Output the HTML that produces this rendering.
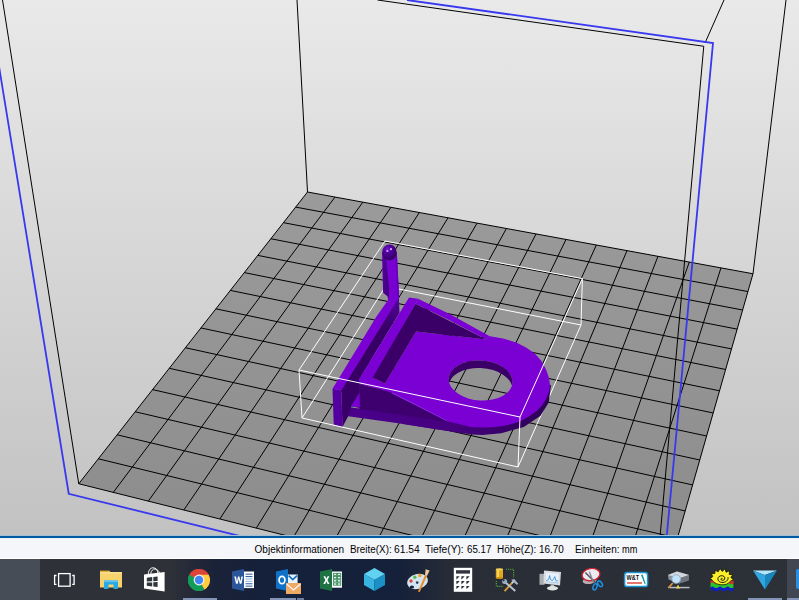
<!DOCTYPE html>
<html><head><meta charset="utf-8"><title>3D</title>
<style>
html,body{margin:0;padding:0;}
body{width:799px;height:600px;overflow:hidden;position:relative;background:#c2c2c2;font-family:"Liberation Sans",sans-serif;}
#vp{position:absolute;left:0;top:0;width:799px;height:535px;background:linear-gradient(to bottom,#e9e9e9 0px,#c2c2c2 536px);overflow:hidden;}
#vp svg{position:absolute;left:0;top:0;}
#status{position:absolute;left:0;top:535px;width:799px;height:24px;background:linear-gradient(to bottom,#a4bfd6 0px,#a4bfd6 1px,#045a9e 1px,#045a9e 3px,#e9f5fb 3px,#e9f5fb 4px,#f5f6fa 4px,#f5f6fa 23px,#ffffff 23px);}
#status span{position:absolute;top:8.6px;font-size:10px;line-height:12px;color:#000;white-space:pre;transform-origin:0 0;}
#tb{position:absolute;left:0;top:559px;width:799px;height:41px;background:linear-gradient(to right,#2e3138 0px,#2e3138 170px,#1a2238 215px,#15203a 260px,#15203a 400px,#292d36 455px,#2c3037 799px);overflow:hidden;}
#tb .l{position:absolute;left:0;top:0;width:40px;height:41px;background:#474d56;}
#tb .r{position:absolute;left:787px;top:0;width:12px;height:41px;background:#404753;}
#tb svg{position:absolute;left:0;top:0;}
</style></head><body>
<div id="vp">
<svg width="799" height="536" viewBox="0 0 799 536">
<polygon points="307.50,192.00 753.00,273.75 652.00,627.00 78.75,483.75" fill="rgba(73,73,73,0.44)"/>
<g stroke="#000" stroke-width="1" fill="none">
<line x1="307.50" y1="192.00" x2="78.75" y2="483.75"/>
<line x1="307.50" y1="192.00" x2="753.00" y2="273.75"/>
<line x1="335.02" y1="197.05" x2="113.29" y2="492.38"/>
<line x1="295.67" y1="207.09" x2="747.91" y2="291.56"/>
<line x1="362.83" y1="202.15" x2="148.31" y2="501.13"/>
<line x1="283.46" y1="222.66" x2="742.64" y2="310.00"/>
<line x1="390.94" y1="207.31" x2="183.81" y2="510.00"/>
<line x1="270.84" y1="238.76" x2="737.17" y2="329.11"/>
<line x1="419.35" y1="212.52" x2="219.82" y2="519.00"/>
<line x1="257.80" y1="255.39" x2="731.51" y2="348.92"/>
<line x1="448.06" y1="217.79" x2="256.33" y2="528.13"/>
<line x1="244.31" y1="272.60" x2="725.63" y2="369.47"/>
<line x1="477.08" y1="223.12" x2="293.37" y2="537.38"/>
<line x1="230.35" y1="290.40" x2="719.53" y2="390.80"/>
<line x1="506.41" y1="228.50" x2="330.93" y2="546.77"/>
<line x1="215.89" y1="308.84" x2="713.20" y2="412.96"/>
<line x1="536.06" y1="233.94" x2="369.03" y2="556.29"/>
<line x1="200.92" y1="327.94" x2="706.61" y2="436.00"/>
<line x1="566.03" y1="239.44" x2="407.70" y2="565.95"/>
<line x1="185.39" y1="347.74" x2="699.75" y2="459.98"/>
<line x1="596.34" y1="245.00" x2="446.92" y2="575.75"/>
<line x1="169.28" y1="368.29" x2="692.62" y2="484.94"/>
<line x1="626.98" y1="250.62" x2="486.73" y2="585.70"/>
<line x1="152.56" y1="389.62" x2="685.18" y2="510.96"/>
<line x1="657.96" y1="256.31" x2="527.12" y2="595.79"/>
<line x1="135.18" y1="411.78" x2="677.42" y2="538.09"/>
<line x1="689.28" y1="262.06" x2="568.13" y2="606.04"/>
<line x1="117.12" y1="434.81" x2="669.32" y2="566.42"/>
<line x1="720.96" y1="267.87" x2="609.75" y2="616.44"/>
<line x1="98.32" y1="458.79" x2="660.85" y2="596.03"/>
<line x1="753.00" y1="273.75" x2="652.00" y2="627.00"/>
<line x1="78.75" y1="483.75" x2="652.00" y2="627.00"/>
</g>
<g stroke="#000" stroke-width="1" fill="none">
<line x1="2.5" y1="0" x2="78.75" y2="483.75"/>
<line x1="297" y1="0" x2="307.5" y2="192"/>
<line x1="786" y1="0" x2="753" y2="273.75"/>
<line x1="703.75" y1="46.25" x2="652" y2="627"/>
<line x1="377.5" y1="0" x2="703.75" y2="46.25"/>
<line x1="705" y1="43" x2="724" y2="0"/>
</g>
<g stroke="#3838ef" stroke-width="1.8" fill="none" stroke-linejoin="miter">
<polyline points="-5.3,40 68.75,493.75 260,541"/>
<polyline points="407,0 713,43 666.75,536"/>
</g>
<defs>
<radialGradient id="sph" cx="0.36" cy="0.30" r="0.8">
<stop offset="0" stop-color="#7418d0"/><stop offset="0.3" stop-color="#5200a0"/><stop offset="0.7" stop-color="#3c0072"/><stop offset="1" stop-color="#300060"/>
</radialGradient>
<linearGradient id="pl" x1="0" x2="1" y1="0" y2="0"><stop offset="0" stop-color="#5600a2"/><stop offset="1" stop-color="#3c0074"/></linearGradient>
<clipPath id="holeclip"><path clip-rule="evenodd" d="M0,0H799V536H0Z M448.6,386.5 a32,20 4 1,0 64,3 a32,20 4 1,0 -64,-3 Z"/></clipPath>
<linearGradient id="band" gradientUnits="userSpaceOnUse" x1="350" y1="0" x2="552" y2="0"><stop offset="0" stop-color="#4a008c"/><stop offset="0.5" stop-color="#46007f"/><stop offset="0.75" stop-color="#38006a"/><stop offset="1" stop-color="#2c0054"/></linearGradient>
<linearGradient id="d1g" gradientUnits="userSpaceOnUse" x1="0" y1="297" x2="0" y2="328"><stop offset="0" stop-color="#5604a6"/><stop offset="1" stop-color="#380066"/></linearGradient>
</defs>
<!-- bbox back lines -->
<g stroke="#fff" stroke-width="1" fill="none">
<polyline points="302,418 385.6,286.4 581,325"/>
<polyline points="299,370 385,241 582.4,278.6"/>
<line x1="582.4" y1="278.6" x2="581" y2="325"/>
<line x1="581" y1="325" x2="518" y2="467"/>
</g>
<!-- model -->
<g>
<!-- base plate thickness (side band) -->
<path fill="url(#band)" d="M346.5,416 L350.6,407.6 L446,421.5 L400,423.5 L435,429 L465,433.4 L472,434.4 L482.5,435 L501.25,433.2 L523.75,427 L540.5,415.8 L548.7,402.5 L551,385 L549,385 L500,405 L420,405 Z"/>
<!-- bar (front face of base) -->
<polygon fill="url(#band)" points="350.6,407.6 415,416.25 447,421.3 465,425 465,433.4 435,429 400,423.5 346.5,416"/>
<!-- base plate top with hole -->
<path fill="#7a00d4" fill-rule="evenodd" d="M416,331.5 L486.25,339.4 L490,336.25 L503,338.5 L516.25,342.5 L526,347.5 L535,353.75 L541.5,361 L546.25,370 L549,378 L550,385 L549,392 L546.25,398.75 L542,405.5 L536.25,411.25 L529,416.5 L520,421.25 L511,424.2 L501.25,426.25 L492,427.2 L482.5,427.5 L470,426.9 L465,425.5 L447,421.3 L415,405 L390,392.5 L365,385.6 L359.3,384 L358.75,380 L371.25,376.9 L385,383.5 Z
 M448.6,379 a32,20 4 1,0 64,3 a32,20 4 1,0 -64,-3 Z"/>
<!-- hole inner wall -->
<path fill="#3a0068" clip-path="url(#holeclip)" d="M448.6,379 a32,20 4 1,0 64,3 a32,20 4 1,0 -64,-3 Z"/>
<!-- subtle boss ring -->
<path fill="none" stroke="#7208c8" stroke-width="1" d="M440,366 C452,350 490,342 520,352 C536,358 544,370 543,384"/>
<!-- gusset top streak -->

<!-- D1 + post right face dark -->
<polygon fill="url(#d1g)" points="398.9,297.8 399.5,312.8 359.2,379.5 359.8,384 359.8,408 351.4,406.2 348,416.5 342.5,426.9 341.25,390.6"/>
<!-- gusset front face -->
<polygon fill="#3d006e" points="359.3,383.8 365,385.4 390,392.3 415,404.8 447,421.3 447,422 415,417 359.3,409"/>
<!-- light triangle -->
<polygon fill="#7a00d4" points="351,406.3 359.5,392.7 359.8,407.6"/>
<polygon fill="#8a24e0" points="392,392.2 415,403.8 447,420.2 447,421.3 415,405 392,393.4"/>
<!-- D2 + back wall front face -->
<polygon fill="#3a0068" points="415.6,303.75 486.25,339.4 416,331.5 385,383.5 371.25,376.9"/>
<!-- back wall top -->
<polygon fill="#7a00d4" points="418,298.75 450,314.3 487.5,335 490,336.5 486.25,339.6 450,320.6 415.6,303.75"/>
<!-- L2 inner wall top -->
<polygon fill="#7a00d4" points="409,297.4 418,298.75 415.6,303.75 372.4,378 359.2,381.2 358.75,380"/>
<!-- L1 outer wall top -->
<polygon fill="#7a00d4" points="387.9,300.3 388.2,296.5 398.9,297.8 341.25,390.6 332.5,388.75 376,317.3"/>
<!-- post front face -->
<polygon fill="#5400a0" points="332.5,388.75 341.25,390.6 342.5,426.9 333.75,424.4"/>
<!-- pole -->
<polygon fill="#7800d2" points="382.3,252 396.8,252 398.6,285 399.1,298.4 388,300 387.6,296.3 383.1,292.5"/>
<polygon fill="url(#pl)" points="382.3,252 385.8,256 389.2,290 388.6,299 387.6,296.3 383.1,292.5"/>
<polygon fill="#6600bc" points="395,258 396.9,254 399,297 397.4,297"/>
<ellipse cx="389.4" cy="252.4" rx="7.3" ry="8" fill="url(#sph)"/>
<circle cx="387.4" cy="251" r="1.1" fill="#d4a8ff"/>
<circle cx="391" cy="249.2" r="1.1" fill="#d4a8ff"/>
</g>
<!-- bbox front lines -->
<g stroke="#fff" stroke-width="1" fill="none">
<polyline points="299,370 520,417 582.4,278.6"/>
<line x1="299" y1="370" x2="302" y2="418"/>
<line x1="520" y1="417" x2="518" y2="467"/>
<line x1="302" y1="418" x2="518" y2="467"/>
</g>

</svg>
</div>
<div id="status"><span style="left:254.6px;transform:scaleX(1.0000)">Objektinformationen</span><span style="left:349.6px;transform:scaleX(0.9874)">Breite(X):</span><span style="left:394.1px;transform:scaleX(1.0268)">61.54</span><span style="left:425.1px;transform:scaleX(1.0192)">Tiefe(Y):</span><span style="left:466.5px;transform:scaleX(0.9748)">65.17</span><span style="left:496.6px;transform:scaleX(0.9962)">Höhe(Z):</span><span style="left:538.6px;transform:scaleX(0.9948)">16.70</span><span style="left:574.6px;transform:scaleX(1.0004)">Einheiten:</span><span style="left:621.8px;transform:scaleX(0.9178)">mm</span></div>
<div id="tb"><div class="l"></div><div class="r"></div>
<svg width="799" height="41" viewBox="0 559 799 41">
<!-- indicators -->
<g fill="#8494b6">
<rect x="183" y="598" width="34" height="2"/>
<rect x="270" y="598" width="26" height="2"/>
<rect x="297" y="598" width="7" height="2" fill="#6f7d9c"/>
<rect x="748" y="598" width="34" height="2"/>
<rect x="787" y="598" width="12" height="2"/>
</g>
<!-- task view -->
<g fill="none" stroke="#fff" stroke-width="1.3">
<rect x="58.6" y="573.6" width="11.5" height="12.6"/>
<polyline points="56.5,575.5 54.6,575.5 54.6,584.3 56.5,584.3"/>
<polyline points="72.2,575.5 74.1,575.5 74.1,584.3 72.2,584.3"/>
</g>
<!-- file explorer -->
<g>
<path d="M100,571 L109.5,571 L110.5,572 L122,572 L122,587.5 L100,587.5 Z" fill="#f7d36e"/>
<rect x="100" y="570.6" width="9.3" height="1.6" fill="#e3ac3a"/>
<rect x="100" y="572.2" width="22" height="1.2" fill="#fbe39a"/>
<path d="M104,580.5 L118,580.5 L118,589 L113.5,589 L113.5,584.5 L108.5,584.5 L108.5,589 L104,589 Z" fill="#29a9e6"/>
<rect x="104" y="580.5" width="14" height="1.6" fill="#5cc6f4"/>
</g>
<!-- store -->
<g>
<path d="M148.2,574.5 C148.5,569.5 151,567.6 153.4,567.8 C156,568 157.6,570 158,573.5" fill="none" stroke="#fff" stroke-width="1"/>
<path d="M150.6,574 C151.2,570.6 153,568.8 155,569 C157.4,569.3 158.8,571 159.6,573.3" fill="none" stroke="#fff" stroke-width="0.9"/>
<polygon points="144,574.6 164.6,572 164.6,591.6 144,588.6" fill="#fff"/>
<g fill="#30343c">
<polygon points="146.8,577.8 152.2,577.1 152.2,581.3 146.8,581.6"/>
<polygon points="153.3,577 157.6,576.4 157.6,581 153.3,581.2"/>
<polygon points="146.8,582.6 152.2,582.4 152.2,586.4 146.8,585.8"/>
<polygon points="153.3,582.3 157.6,582.1 157.6,587 153.3,586.5"/>
</g>
</g>
<!-- chrome -->
<g>
<circle cx="199" cy="580" r="11" fill="#db4437"/>
<path d="M199,580 L189.47,574.5 A11,11 0 0,0 204.5,589.53 Z" fill="#0f9d58"/>
<path d="M199,580 L204.5,589.53 A11,11 0 0,0 208.53,574.5 L199,574.5 Z" fill="#ffcd40"/>
<path d="M199,580 L189.47,574.5 A11,11 0 0,1 208.53,574.5 L199,574.5 Z" fill="#db4437"/>
<path d="M194.3,582.7 L189.47,574.5 A11,11 0 0,0 204.5,589.53 L199.6,585.4 Z" fill="#0f9d58"/>
<circle cx="199" cy="580" r="5.4" fill="#f1f1f1"/>
<circle cx="199" cy="580" r="4.2" fill="#4285f4"/>
</g>
<!-- word -->
<g>
<rect x="243" y="571.5" width="11" height="16.6" fill="#fff"/>
<g fill="#3a66a8"><rect x="245.5" y="573.6" width="7" height="1.1"/><rect x="245.5" y="576" width="7" height="1.1"/><rect x="245.5" y="578.4" width="7" height="1.1" fill="#9db8dc"/><rect x="245.5" y="580.8" width="7" height="1.1" fill="#9db8dc"/><rect x="245.5" y="583.2" width="7" height="1.1"/><rect x="245.5" y="585.6" width="7" height="1.1"/></g>
<polygon points="232,571.5 244,569 244,591 232,588.5" fill="#2b579a"/>
<path d="M234.3,576.4 L236,576.4 L236.9,581.6 L238,576.4 L239.4,576.4 L240.5,581.6 L241.4,576.4 L243,576.4 L241.4,583.8 L239.7,583.8 L238.7,579 L237.7,583.8 L236,583.8 Z" fill="#fff"/>
</g>
<!-- outlook -->
<g>
<rect x="288" y="574.5" width="9.6" height="9.2" fill="#e6f2fc"/>
<path d="M288.6,575.6 L292.8,579.6 L297,575.6" fill="none" stroke="#0f6ec4" stroke-width="1.6"/>
<polygon points="276,571.5 288,569 288,591 276,588.5" fill="#0f72c8"/>
<ellipse cx="282" cy="580" rx="2.9" ry="3.7" fill="none" stroke="#fff" stroke-width="1.7"/>
<rect x="286" y="583" width="15" height="11" fill="#efaa64"/>
<path d="M286.6,584 L293.5,590 L300.4,584" fill="none" stroke="#fff" stroke-width="1.1"/>
</g>
<!-- excel -->
<g>
<rect x="331" y="571.5" width="11" height="16.2" fill="#fff"/>
<g fill="#dff0e4" stroke="#2e8555" stroke-width="0.8"><rect x="333.4" y="573.3" width="3.3" height="2.3"/><rect x="337.5" y="573.3" width="3.3" height="2.3"/><rect x="333.4" y="576.5" width="3.3" height="2.3"/><rect x="337.5" y="576.5" width="3.3" height="2.3"/><rect x="333.4" y="579.7" width="3.3" height="2.3"/><rect x="337.5" y="579.7" width="3.3" height="2.3"/><rect x="333.4" y="582.9" width="3.3" height="2.3"/><rect x="337.5" y="582.9" width="3.3" height="2.3"/></g>
<polygon points="320,571.5 332,569 332,591 320,588.5" fill="#1f7244"/>
<path d="M323.4,576.2 L325.3,576.2 L326.4,578.7 L327.6,576.2 L329.4,576.2 L327.4,580 L329.5,583.9 L327.6,583.9 L326.4,581.3 L325.2,583.9 L323.3,583.9 L325.4,580 Z" fill="#fff"/>
</g>
<!-- cube -->
<g>
<polygon points="374.5,568 385,574 374.5,580 364,574" fill="#62d2f2"/>
<polygon points="364,574 374.5,580 374.5,591 364,585" fill="#37b4e2"/>
<polygon points="385,574 374.5,580 374.5,591 385,585" fill="#1b90c6"/>
</g>
<!-- paint -->
<g>
<ellipse cx="417.5" cy="581.5" rx="10.6" ry="7.4" transform="rotate(-14 417.5 581.5)" fill="#d4e4f3"/>
<ellipse cx="411.9" cy="587.1" rx="2.2" ry="1.5" fill="#15203a"/>
<circle cx="411" cy="581" r="1.7" fill="#d9473a"/>
<circle cx="414.8" cy="577.2" r="1.7" fill="#5cb648"/>
<circle cx="419.8" cy="575.6" r="1.8" fill="#eaa52a"/>
<circle cx="417.2" cy="582.6" r="1.3" fill="#2b3a52"/>
<path d="M418,591.4 L425,575 L427,575.9 L419.6,592.2 Z" fill="#e6902c"/>
<path d="M425,575.2 L425.6,569.2 L429.6,570.6 L427,576 Z" fill="#eec79c"/>
</g>
<!-- calculator -->
<g>
<rect x="453.8" y="567.8" width="18.4" height="24" fill="#fff"/>
<rect x="456" y="570.2" width="14" height="3.4" fill="#30343c"/>
<g fill="#2c3037">
<polygon points="456.4,576.2 459.6,576.2 458.0,578.1 456.4,579.4"/><polygon points="461.4,576.2 464.6,576.2 463.0,578.1 461.4,579.4"/><polygon points="466.4,576.2 469.6,576.2 468.0,578.1 466.4,579.4"/><polygon points="456.4,581.1 459.6,581.1 458.0,583.0 456.4,584.3"/><polygon points="461.4,581.1 464.6,581.1 463.0,583.0 461.4,584.3"/><polygon points="466.4,581.1 469.6,581.1 468.0,583.0 466.4,584.3"/><polygon points="456.4,585.9 459.6,585.9 458.0,587.8 456.4,589.1"/><polygon points="461.4,585.9 464.6,585.9 463.0,587.8 461.4,589.1"/><polygon points="466.4,585.9 469.6,585.9 468.0,587.8 466.4,589.1"/>
</g>
</g>
<!-- tools -->
<g>
<rect x="495.8" y="569.4" width="7.2" height="8.6" fill="#e3a81c"/>
<rect x="497" y="569.4" width="2" height="8.6" fill="#f5d462"/>
<ellipse cx="499.4" cy="569.4" rx="3.6" ry="1.1" fill="#f3cf56"/>
<ellipse cx="499.4" cy="578" rx="3.6" ry="1" fill="#c8900f"/>
<g stroke="#4fb43a" stroke-width="1.1" stroke-dasharray="1.1,1" fill="none">
<polyline points="506,569.3 513.6,569.3 513.6,577.2"/>
<polyline points="496.3,581 496.3,586.4 503.6,586.4"/>
</g>
<line x1="504.6" y1="591.2" x2="512.5" y2="582.4" stroke="#dfa02e" stroke-width="1.8"/>
<line x1="512" y1="583" x2="514.2" y2="580.6" stroke="#c9d3df" stroke-width="2"/>
<path d="M511.2,579.8 L516.6,584.8 L518.4,584 L514.3,579 Z" fill="#a9b7c9"/>
<line x1="505.5" y1="582.5" x2="515.3" y2="591" stroke="#b4c0d0" stroke-width="2"/>
<circle cx="504.6" cy="581.4" r="2.5" fill="#9fb0c6"/>
<circle cx="503.6" cy="580.3" r="1.1" fill="#2d3139"/>
</g>
<!-- monitor -->
<g>
<rect x="539.5" y="573.8" width="5" height="11" fill="#a9adb2"/>
<polygon points="544,570.5 561,572 560,585.6 543.5,583.6" fill="#d9dbde"/>
<polygon points="546,572.6 559,573.7 558.2,583.6 545.6,582" fill="#e6f1fb"/>
<polyline points="546.3,580.5 548.6,579.6 549.6,575.6 550.6,579.6 552.4,580.6 553.6,579 554.8,576.6 555.8,580.6 557.8,581" fill="none" stroke="#3f8fd2" stroke-width="0.9"/>
<polygon points="546,581.2 558,582 558,583.5 545.8,582" fill="#a9d2f2"/>
<rect x="550.6" y="584.6" width="3.6" height="3" fill="#b9bcc0"/>
<ellipse cx="552.5" cy="588.3" rx="5.6" ry="2.2" fill="#e2e3e5"/>
</g>
<!-- snipping -->
<g>
<ellipse cx="589.6" cy="580.6" rx="7" ry="3.4" transform="rotate(-8 589.6 580.6)" fill="#b7adae"/>
<ellipse cx="591" cy="574.6" rx="9" ry="6" transform="rotate(-10 591 574.6)" fill="#ececf0" stroke="#cf2434" stroke-width="1.3"/>
<line x1="585.4" y1="572.6" x2="595.4" y2="582.6" stroke="#5a5f68" stroke-width="1.5"/>
<line x1="589.4" y1="571.6" x2="593.4" y2="582.8" stroke="#80858e" stroke-width="1.3"/>
<ellipse cx="595" cy="586.8" rx="1.9" ry="3.2" transform="rotate(20 595 586.8)" fill="none" stroke="#1f8fe2" stroke-width="1.5"/>
<ellipse cx="600" cy="583.8" rx="1.9" ry="3.2" transform="rotate(-35 600 583.8)" fill="none" stroke="#1f8fe2" stroke-width="1.5"/>
</g>
<!-- W&T -->
<g>
<rect x="624.6" y="572.6" width="23" height="14" rx="2.6" fill="#fff" stroke="#1b93d2" stroke-width="1.5"/>
<text x="626.6" y="580" font-family="Liberation Sans, sans-serif" font-weight="bold" font-size="6.6" fill="#111" textLength="12.4" lengthAdjust="spacingAndGlyphs">W&amp;T</text>
<rect x="627" y="582.2" width="15" height="1.6" fill="#e0564a"/>
<path d="M641,575 L642.6,574.6 L645.6,583.6 L644.8,584.4 Z" fill="#13988f"/>
</g>
<!-- projector -->
<g>
<polygon points="668,575 677,571.5 689,575 688.5,580.5 679,583.6 668.5,579.6" fill="#8d9198"/>
<polygon points="668,575 677,571.5 689,575 679.4,578.2" fill="#d3d6da"/>
<polygon points="679.4,578.2 689,575 688.5,580.5 679,583.6" fill="#6f747c"/>
<line x1="672.8" y1="583" x2="668.2" y2="588" stroke="#e8923a" stroke-width="1.8"/>
<circle cx="676.2" cy="579" r="4.3" fill="#c3e2fa" stroke="#8fb4d4" stroke-width="1"/>
<rect x="669.5" y="586.8" width="20" height="1.5" fill="#b9bdc2"/>
<polygon points="678,584.6 680,588.6 676,588.6" fill="#f1d04a"/>
</g>
<!-- sun -->
<g>
<rect x="710.5" y="580.6" width="23" height="3.4" fill="#d8322a"/>
<path d="M710.5,583.4 q2,-1.6 3.8,0 t3.8,0 t3.8,0 t3.8,0 t3.8,0 t3.8,0 L733.5,588 L710.5,588 Z" fill="#2cc32c"/>
<path d="M710.5,587.4 q2,-1.6 3.8,0 t3.8,0 t3.8,0 t3.8,0 t3.8,0 t3.8,0 L733.5,590.6 q-2,1.8 -3.8,0 t-3.8,0 t-3.8,0 t-3.8,0 t-3.8,0 t-3.8,0 Z" fill="#1020c8"/>
<path d="M712.4,580.4 L710.4,578.2 L712.8,576.6 L711.4,573.4 L714.8,573.6 L715.2,570.2 L718.2,571.8 L720,568.6 L722.2,571.4 L725,568.8 L726,572.2 L729.6,570.8 L729.2,574.4 L732.8,574.6 L730.8,577.4 L733.4,579.6 L730.4,581.2 C728.4,584.2 724.8,585 721.8,584.8 C718,584.6 714,583.4 712.4,580.4 Z" fill="#fbf02a" stroke="#141400" stroke-width="0.8"/>
<path d="M722.4,578.6 C721.2,578 720.4,579.2 721.4,580 C723,581 725.2,579.8 724.8,577.8 C724.4,575.6 721,575 719,576.6 C716.8,578.6 718,582 721.6,582.4 C725.6,582.8 728.6,580.4 728,577.2" fill="none" stroke="#141400" stroke-width="1"/>
</g>
<!-- triangle -->
<g>
<polygon points="753,570.5 777,570.5 765,575" fill="#b4e6fb"/>
<polygon points="753,570.5 765,575 765,589.5" fill="#2fa6de"/>
<polygon points="777,570.5 765,575 765,589.5" fill="#1b86be"/>
</g>
<!-- partial right icon -->
<rect x="796" y="569" width="8" height="20" rx="2" fill="#2a8fe0"/>

</svg>
</div>
</body></html>
